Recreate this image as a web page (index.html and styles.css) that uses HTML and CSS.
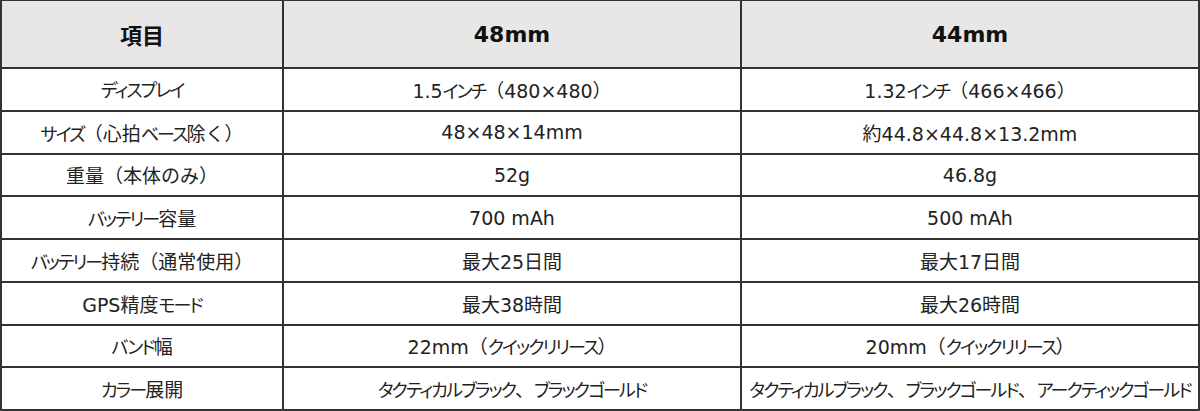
FILE: index.html
```html
<!DOCTYPE html>
<html lang="ja">
<head>
<meta charset="utf-8">
<link rel="stylesheet" href="styles.css">
</head>
<body>
<table class="spec">
  <colgroup>
    <col class="c1"><col class="c2"><col class="c3">
  </colgroup>
  <thead>
    <tr><th>項目</th><th>48mm</th><th>44mm</th></tr>
  </thead>
  <tbody>
    <tr>
      <td><span class="k">ディスプレイ</span></td>
      <td>1.5<span class="k">インチ</span>（480×480）</td>
      <td>1.32<span class="k">インチ</span>（466×466）</td>
    </tr>
    <tr>
      <td><span class="k">サイズ</span>（心拍<span class="k">ベース</span>除く）</td>
      <td>48×48×14mm</td>
      <td>約44.8×44.8×13.2mm</td>
    </tr>
    <tr>
      <td>重量（本体のみ）</td>
      <td>52g</td>
      <td>46.8g</td>
    </tr>
    <tr>
      <td><span class="k">バッテリー</span>容量</td>
      <td>700 mAh</td>
      <td>500 mAh</td>
    </tr>
    <tr>
      <td><span class="k">バッテリー</span>持続（通常使用）</td>
      <td>最大25日間</td>
      <td>最大17日間</td>
    </tr>
    <tr>
      <td>GPS精度<span class="k">モード</span></td>
      <td>最大38時間</td>
      <td>最大26時間</td>
    </tr>
    <tr>
      <td><span class="k">バンド</span>幅</td>
      <td>22mm（<span class="k">クイックリリース</span>）</td>
      <td>20mm（<span class="k">クイックリリース</span>）</td>
    </tr>
    <tr>
      <td><span class="k">カラー</span>展開</td>
      <td><span class="k">タクティカルブラック</span>、<span class="k">ブラックゴールド</span></td>
      <td><span class="k">タクティカルブラック</span>、<span class="k">ブラックゴールド</span>、<span class="k">アークティックゴールド</span></td>
    </tr>
  </tbody>
</table>
</body>
</html>
```

FILE: styles.css
```css
html, body {
  margin: 0;
  padding: 0;
  background: #ffffff;
}
body {
  font-family: "DejaVu Sans", "Noto Sans CJK JP", sans-serif;
  color: #222222;
}
.spec {
  border-collapse: collapse;
  width: 1198px;
  table-layout: fixed;
  margin-top: -1px;
}
.c1 { width: 282px; }
.c2 { width: 458px; }
.c3 { width: 458px; }
.spec th,
.spec td {
  border: 2px solid #333333;
  text-align: center;
  padding: 0;
  white-space: nowrap;
}
.spec th {
  background: #e7e7e7;
  height: 66px;
  font-size: 22px;
  font-weight: 700;
  color: #111111;
}
.spec td {
  height: 40.75px;
  font-size: 19px;
  font-weight: 400;
}
.k {
  font-size: 18px;
  letter-spacing: -1.9px;
  font-feature-settings: "palt" 1;
}
```
